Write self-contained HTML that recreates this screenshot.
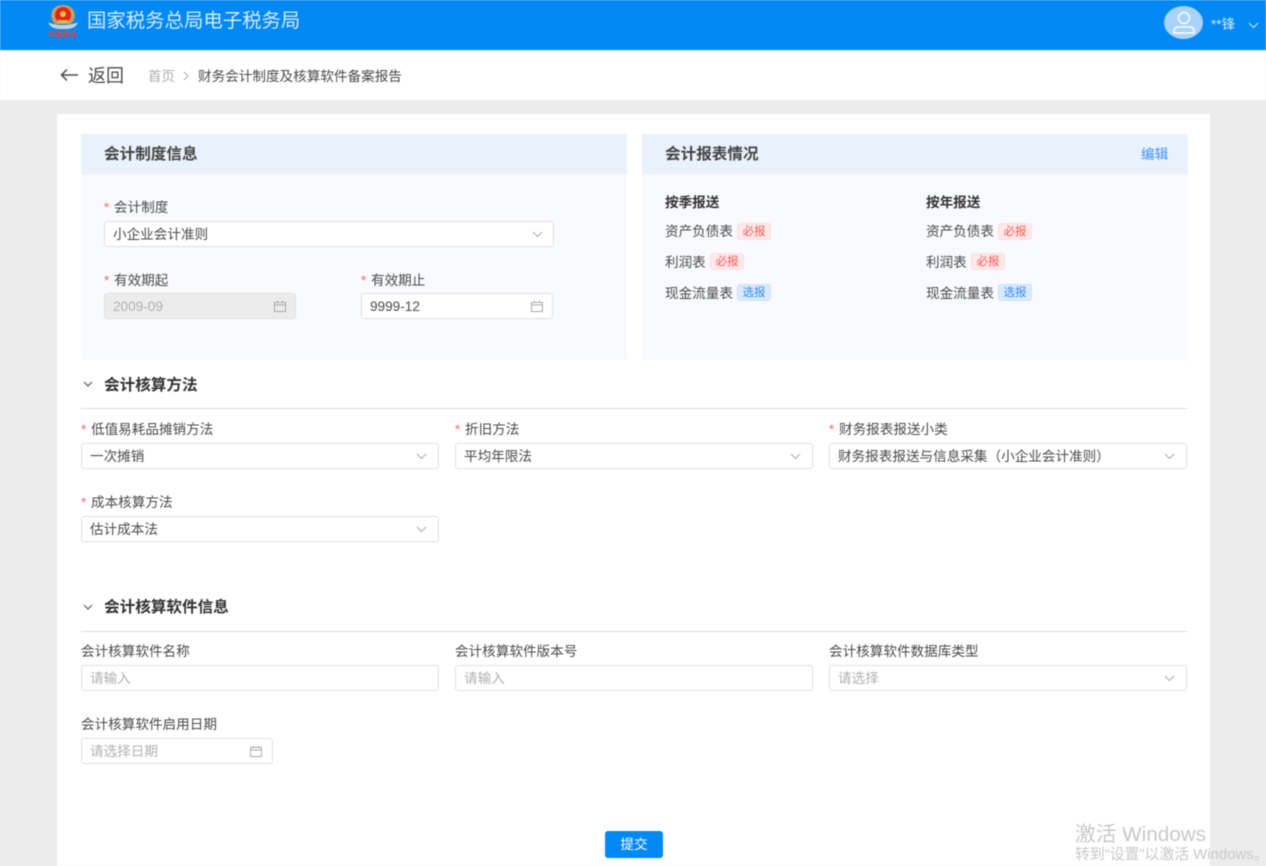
<!DOCTYPE html>
<html lang="zh-CN">
<head>
<meta charset="utf-8">
<title>财务会计制度及核算软件备案报告</title>
<style>
html,body{margin:0;padding:0;background:#ececec}
body{width:1266px;height:866px;overflow:hidden;position:relative}
#p{position:absolute;left:0;top:0;width:1266px;height:866px;background:#ececec;overflow:hidden;filter:blur(.45px);font-family:"Liberation Sans","Noto Sans CJK SC",sans-serif;color:#4a4a4a}
.a{position:absolute}
.t{position:absolute;white-space:nowrap;line-height:20px;font-size:13.6px;margin-top:1px}
.b{font-weight:700}
.star{color:#f66;display:inline-block;width:10px}
.box{position:absolute;box-sizing:border-box;height:26px;background:#fff;border:1px solid #e0e0e0;border-radius:3px;font-size:13.6px;line-height:26px;padding-left:8px;color:#4a4a4a;white-space:nowrap}
.ph{color:#b0b0b0}
.box svg{position:absolute;top:6px}
.tag{position:absolute;box-sizing:border-box;height:17px;width:34px;border-radius:3px;font-size:11.5px;line-height:16px;text-align:center;white-space:nowrap}
.r{background:#ffe9e9;border:1px solid #ffdcdc;color:#f55}
.u{background:#dbe9fd;border:1px solid #cfe0fb;color:#2f8cf5}
.ln{position:absolute;height:1px;background:#dcdcdc;left:81px;width:1106px}
</style>
</head>
<body>
<div id="p">
<div class="a" style="left:0;top:0;width:1266px;height:50px;background:#0088f5"></div>
<svg class="a" style="left:47px;top:3px" width="32" height="27" viewBox="0 0 32 27">
<path d="M1 19c4 2 9 3 15 3s11-1 15-3c-1 3-3 5-6 6-3 1-6 1-9 1s-6 0-9-1c-3-1-5-3-6-6z" fill="#c9d3d3"/>
<path d="M5 8c-2 6 0 11 4 13h14c4-2 6-7 4-13-2-4-6-6-11-6S7 4 5 8z" fill="#c99c62"/>
<circle cx="16" cy="12" r="8" fill="#e3231e"/>
<circle cx="16" cy="11" r="3" fill="#f4c430"/>
<rect x="11" y="17" width="10" height="3" fill="#f0c040"/>
</svg>
<div class="t b" style="left:48px;top:29px;font-size:7.200px;line-height:10px;color:#e8403a">中国税务</div>
<div class="t" style="left:87px;top:10px;font-size:19.400px;color:#d6ebff">国家税务总局电子税务局</div>
<div class="a" style="left:1164px;top:6px;width:39px;height:33px;border-radius:50%;background:#a9d3fb"></div>
<svg class="a" style="left:1170px;top:10px" width="28" height="26" viewBox="0 0 28 26" fill="none" stroke="#fff" stroke-width="1.500">
<circle cx="14" cy="8" r="5.500"/><path d="M4 23v-2c0-3 2-4 5-4h10c3 0 5 1 5 4v2z"/>
</svg>
<div class="t" style="left:1211px;top:14px;font-size:13.600px;color:#d6ebff">**锋</div>
<svg class="a" style="left:1248px;top:22px" width="11" height="7" viewBox="0 0 11 7" fill="none" stroke="#cfe6ff" stroke-width="1.100"><path d="M1 1l4.500 4.500L10 1"/></svg>

<div class="a" style="left:0;top:51px;width:1266px;height:49px;background:#fff"></div>
<svg class="a" style="left:60px;top:68px" width="19" height="14" viewBox="0 0 19 14" fill="none" stroke="#4a4a4a" stroke-width="1.500"><path d="M18 7H2M7 1.500L1.500 7 7 12.500"/></svg>
<div class="t" style="left:88px;top:65px;font-size:18px;color:#4a4a4a">返回</div>
<div class="t" style="left:148px;top:66px;font-size:13.400px;color:#aaa">首页</div>
<svg class="a" style="left:183px;top:71px" width="7" height="10" viewBox="0 0 7 10" fill="none" stroke="#aaa" stroke-width="1.100"><path d="M1 1l4 4-4 4"/></svg>
<div class="t" style="left:198px;top:66px;font-size:13.600px;color:#4a4a4a">财务会计制度及核算软件备案报告</div>

<div class="a" style="left:57px;top:114px;width:1153px;height:752px;background:#fff"></div>

<div class="a" style="left:81px;top:134px;width:546px;height:226px;background:#f8faff"></div>
<div class="a" style="left:81px;top:134px;width:546px;height:40px;background:#e9f1fb"></div>
<div class="a" style="left:642px;top:134px;width:546px;height:226px;background:#f8faff"></div>
<div class="a" style="left:642px;top:134px;width:546px;height:40px;background:#e9f1fb"></div>

<div class="t b" style="left:104px;top:144px;font-size:15.600px;color:#444">会计制度信息</div>
<div class="t b" style="left:665px;top:144px;font-size:15.600px;color:#444">会计报表情况</div>
<div class="t" style="left:1141px;top:144px;font-size:13.600px;color:#3b93f5">编辑</div>

<div class="t" style="left:104px;top:197px"><span class="star">*</span>会计制度</div>
<div class="box" style="left:104px;top:221px;width:450px">小企业会计准则<svg style="right:10px;top:9px" width="11" height="7" viewBox="0 0 11 7" fill="none" stroke="#aaa" stroke-width="1.100"><path d="M1 1l4.500 4.500L10 1"/></svg></div>
<div class="t" style="left:104px;top:270px"><span class="star">*</span>有效期起</div>
<div class="box" style="left:104px;top:293px;width:192px;background:#ececec;color:#b0b0b0">2009-09<svg style="right:9px;top:6px" width="12" height="12" viewBox="0 0 12 12" fill="none" stroke="#aaa"><path d="M.5 2.500h11v9H.5zM.5 5h11M3.500 .5v2M8.500 .5v2"/></svg></div>
<div class="t" style="left:361px;top:270px"><span class="star">*</span>有效期止</div>
<div class="box" style="left:361px;top:293px;width:192px">9999-12<svg style="right:9px;top:6px" width="12" height="12" viewBox="0 0 12 12" fill="none" stroke="#aaa"><path d="M.5 2.500h11v9H.5zM.5 5h11M3.500 .5v2M8.500 .5v2"/></svg></div>

<div class="t b" style="left:665px;top:192px;color:#333">按季报送</div>
<div class="t" style="left:665px;top:221px">资产负债表</div><div class="tag r" style="left:737px;top:223px">必报</div>
<div class="t" style="left:665px;top:252px">利润表</div><div class="tag r" style="left:710px;top:253px">必报</div>
<div class="t" style="left:665px;top:283px">现金流量表</div><div class="tag u" style="left:737px;top:284px">选报</div>
<div class="t b" style="left:926px;top:192px;color:#333">按年报送</div>
<div class="t" style="left:926px;top:221px">资产负债表</div><div class="tag r" style="left:998px;top:223px">必报</div>
<div class="t" style="left:926px;top:252px">利润表</div><div class="tag r" style="left:971px;top:253px">必报</div>
<div class="t" style="left:926px;top:283px">现金流量表</div><div class="tag u" style="left:998px;top:284px">选报</div>

<svg class="a" style="left:83px;top:381px" width="10" height="7" viewBox="0 0 10 7" fill="none" stroke="#555" stroke-width="1.200"><path d="M1 1l4 4 4-4"/></svg>
<div class="t b" style="left:104px;top:375px;font-size:15.600px;color:#333">会计核算方法</div>
<div class="ln" style="top:408px"></div>

<div class="t" style="left:81px;top:419px"><span class="star">*</span>低值易耗品摊销方法</div>
<div class="box" style="left:81px;top:443px;width:358px">一次摊销<svg style="right:11px;top:9px" width="11" height="7" viewBox="0 0 11 7" fill="none" stroke="#aaa" stroke-width="1.100"><path d="M1 1l4.500 4.500L10 1"/></svg></div>
<div class="t" style="left:455px;top:419px"><span class="star">*</span>折旧方法</div>
<div class="box" style="left:455px;top:443px;width:358px">平均年限法<svg style="right:11px;top:9px" width="11" height="7" viewBox="0 0 11 7" fill="none" stroke="#aaa" stroke-width="1.100"><path d="M1 1l4.500 4.500L10 1"/></svg></div>
<div class="t" style="left:829px;top:419px"><span class="star">*</span>财务报表报送小类</div>
<div class="box" style="left:829px;top:443px;width:358px">财务报表报送与信息采集（小企业会计准则）<svg style="right:11px;top:9px" width="11" height="7" viewBox="0 0 11 7" fill="none" stroke="#aaa" stroke-width="1.100"><path d="M1 1l4.500 4.500L10 1"/></svg></div>
<div class="t" style="left:81px;top:492px"><span class="star">*</span>成本核算方法</div>
<div class="box" style="left:81px;top:516px;width:358px">估计成本法<svg style="right:11px;top:9px" width="11" height="7" viewBox="0 0 11 7" fill="none" stroke="#aaa" stroke-width="1.100"><path d="M1 1l4.500 4.500L10 1"/></svg></div>

<svg class="a" style="left:83px;top:604px" width="10" height="7" viewBox="0 0 10 7" fill="none" stroke="#555" stroke-width="1.200"><path d="M1 1l4 4 4-4"/></svg>
<div class="t b" style="left:104px;top:597px;font-size:15.600px;color:#333">会计核算软件信息</div>
<div class="ln" style="top:631px"></div>

<div class="t" style="left:81px;top:641px">会计核算软件名称</div>
<div class="box ph" style="left:81px;top:665px;width:358px;color:#b0b0b0">请输入</div>
<div class="t" style="left:455px;top:641px">会计核算软件版本号</div>
<div class="box ph" style="left:455px;top:665px;width:358px;color:#b0b0b0">请输入</div>
<div class="t" style="left:829px;top:641px">会计核算软件数据库类型</div>
<div class="box ph" style="left:829px;top:665px;width:358px;color:#b0b0b0">请选择<svg style="right:11px;top:9px" width="11" height="7" viewBox="0 0 11 7" fill="none" stroke="#aaa" stroke-width="1.100"><path d="M1 1l4.500 4.500L10 1"/></svg></div>
<div class="t" style="left:81px;top:714px">会计核算软件启用日期</div>
<div class="box ph" style="left:81px;top:738px;width:192px;color:#b0b0b0">请选择日期<svg style="right:10px;top:6px" width="12" height="12" viewBox="0 0 12 12" fill="none" stroke="#aaa"><path d="M.5 2.500h11v9H.5zM.5 5h11M3.500 .5v2M8.500 .5v2"/></svg></div>

<div class="a" style="left:605px;top:831px;width:58px;height:27px;background:#0088f5;border-radius:3px;color:#fff;font-size:13.600px;line-height:27px;text-align:center">提交</div>

<div class="t" style="left:1075px;top:824px;font-size:20.700px;color:#c8c8c8">激活 Windows</div>
<div class="t" style="left:1075px;top:844px;font-size:14.900px;color:#c8c8c8">转到“设置”以激活 Windows。</div>
</div>
</body>
</html>
